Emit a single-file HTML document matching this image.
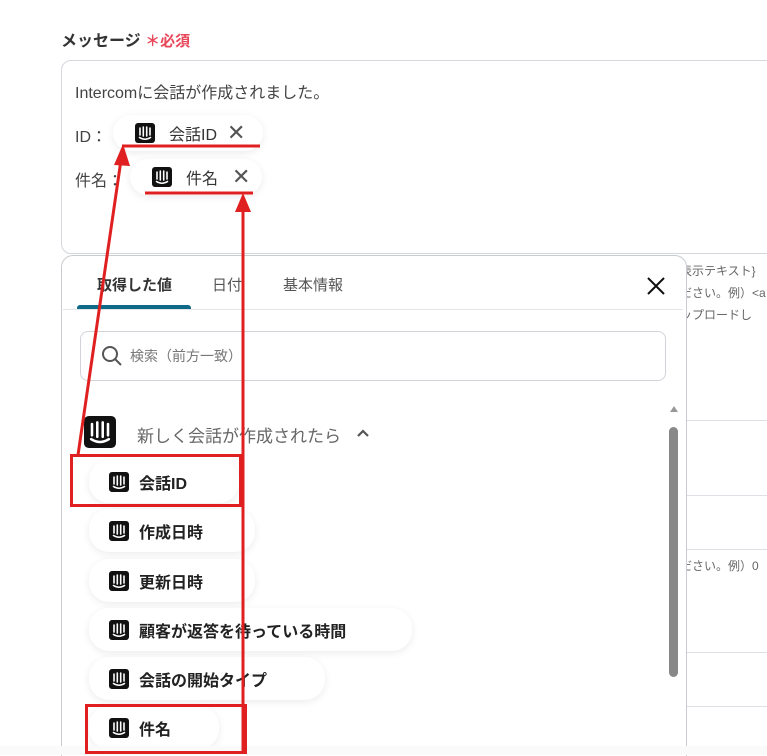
<!DOCTYPE html>
<html><head><meta charset="utf-8"><style>
body{margin:0;width:767px;height:755px;background:#fff;position:relative;overflow:hidden;font-family:"Liberation Sans","Noto Sans CJK JP",sans-serif;color:#333}
.a{position:absolute}
.chip{position:absolute;background:#fff;border-radius:20px;box-shadow:0 2px 8px rgba(0,0,0,.08);display:flex;align-items:center;font-size:16px;color:#333}
.lc{font-weight:bold;color:#222}
.ic{display:inline-block;width:20px;height:20px;margin-right:10px}
.hl{position:absolute;left:680px;width:87px;height:1px;background:#dde0e4}
.side{position:absolute;left:680px;font-size:12px;color:#666;white-space:nowrap}
</style></head><body>
<svg width="0" height="0" style="position:absolute"><defs>
<symbol id="ic" viewBox="0 0 20 20"><rect width="20" height="20" rx="3" fill="#111"/><g stroke="#fff" stroke-width="1.6" fill="none" stroke-linecap="round"><path d="M5 5v7M8.3 4v9M11.7 4v9M15 5v7"/><path d="M4.5 14.5q5.5 3.5 11 0"/></g></symbol>
</defs></svg>

<div class="a" style="left:61px;top:27px;font-size:16px;font-weight:bold;color:#333">メッセージ <span style="color:#e8475a;font-size:15px">＊必須</span></div>
<div class="a" style="left:61px;top:60px;width:720px;height:192px;border:1px solid #d4d7dc;border-radius:10px"></div>
<div class="a" style="left:75px;top:79px;font-size:16px;color:#444">Intercomに会話が作成されました。</div>
<div class="a" style="left:75px;top:123px;font-size:16px;color:#444">ID：</div>
<div class="a" style="left:75px;top:167px;font-size:16px;color:#444">件名：</div>
<div class="chip" style="left:113px;top:115px;width:150px;height:36px"><svg class="ic" style="margin-left:22px;margin-right:14px"><use href="#ic"/></svg>会話ID<span style="margin-left:10px;font-size:22px;color:#555">✕</span></div>
<div class="chip" style="left:130px;top:159px;width:132px;height:36px"><svg class="ic" style="margin-left:22px;margin-right:14px"><use href="#ic"/></svg>件名<span style="margin-left:14px;font-size:22px;color:#555">✕</span></div>

<div class="side" style="top:262px">表示テキスト}</div>
<div class="side" style="top:284px">ださい。例）&lt;a</div>
<div class="side" style="top:306px">ップロードし</div>
<div class="hl" style="top:420px"></div>
<div class="hl" style="top:495px"></div>
<div class="hl" style="top:549px"></div>
<div class="side" style="top:557px">ださい。例）0</div>
<div class="hl" style="top:652px"></div>
<div class="hl" style="top:706px"></div>

<div class="a" style="left:61px;top:255px;width:624px;height:500px;border:1px solid #c8ccd1;border-bottom:none;border-radius:12px 12px 0 0;background:#fff"></div>
<div class="a" style="left:97px;top:274px;font-size:15px;font-weight:bold;color:#333">取得した値</div>
<div class="a" style="left:212px;top:274px;font-size:15px;color:#555">日付</div>
<div class="a" style="left:283px;top:274px;font-size:15px;color:#555">基本情報</div>
<div class="a" style="left:77px;top:305px;width:114px;height:4px;background:#0e6a86;border-radius:3px 3px 0 0"></div>
<div class="a" style="left:63px;top:309px;width:620px;height:1px;background:#e3e5e8"></div>
<svg class="a" style="left:645px;top:275px" width="22" height="22"><path d="M3 3L19 19M19 3L3 19" stroke="#111" stroke-width="2"/></svg>
<div class="a" style="left:80px;top:331px;width:584px;height:48px;border:1px solid #d0d3d8;border-radius:8px"></div>
<svg class="a" style="left:100px;top:344px" width="24" height="24"><circle cx="10" cy="10" r="7" stroke="#555" stroke-width="2" fill="none"/><path d="M15 15l6 6" stroke="#555" stroke-width="2"/></svg>
<div class="a" style="left:130px;top:346px;font-size:14px;color:#777">検索（前方一致）</div>
<svg class="a" style="left:668px;top:404px" width="12" height="10"><path d="M2 8L6 2L10 8Z" fill="#999"/></svg>
<div class="a" style="left:669px;top:427px;width:9px;height:250px;background:#888;border-radius:5px"></div>
<svg class="a" style="left:84px;top:416px" width="32" height="32"><use href="#ic"/></svg>
<div class="a" style="left:137px;top:422px;font-size:17px;color:#666">新しく会話が作成されたら</div>
<svg class="a" style="left:355px;top:426px" width="16" height="14"><path d="M3 10L8 5L13 10" stroke="#555" stroke-width="2.2" fill="none"/></svg>

<div class="chip lc" style="left:89px;top:460px;width:150px;height:43px;padding-left:20px;box-sizing:border-box"><svg class="ic"><use href="#ic"/></svg>会話ID</div>
<div class="chip lc" style="left:89px;top:509px;width:166px;height:43px;padding-left:20px;box-sizing:border-box"><svg class="ic"><use href="#ic"/></svg>作成日時</div>
<div class="chip lc" style="left:89px;top:559px;width:166px;height:43px;padding-left:20px;box-sizing:border-box"><svg class="ic"><use href="#ic"/></svg>更新日時</div>
<div class="chip lc" style="left:89px;top:608px;width:323px;height:43px;padding-left:20px;box-sizing:border-box"><svg class="ic"><use href="#ic"/></svg>顧客が返答を待っている時間</div>
<div class="chip lc" style="left:89px;top:657px;width:236px;height:43px;padding-left:20px;box-sizing:border-box"><svg class="ic"><use href="#ic"/></svg>会話の開始タイプ</div>
<div class="chip lc" style="left:89px;top:706px;width:130px;height:43px;padding-left:20px;box-sizing:border-box"><svg class="ic"><use href="#ic"/></svg>件名</div>
<div class="a" style="left:0;top:746px;width:767px;height:9px;background:#fafafa"></div>

<svg class="a" style="left:0;top:0" width="767" height="755">
<g fill="none" stroke="#e02020" stroke-width="3">
<path d="M122 146H260M145 193H253"/>
<rect x="71.5" y="455.5" width="169" height="50"/>
<rect x="86.5" y="705.5" width="159" height="47"/>
<path d="M78 455L121 160"/>
<path d="M243 706V208"/>
<path d="M243 706V752"/>
</g>
<path d="M123 144L114 165L130 166Z" fill="#e02020"/>
<path d="M243 193L235 212L251 212Z" fill="#e02020"/>
</svg>
</body></html>
